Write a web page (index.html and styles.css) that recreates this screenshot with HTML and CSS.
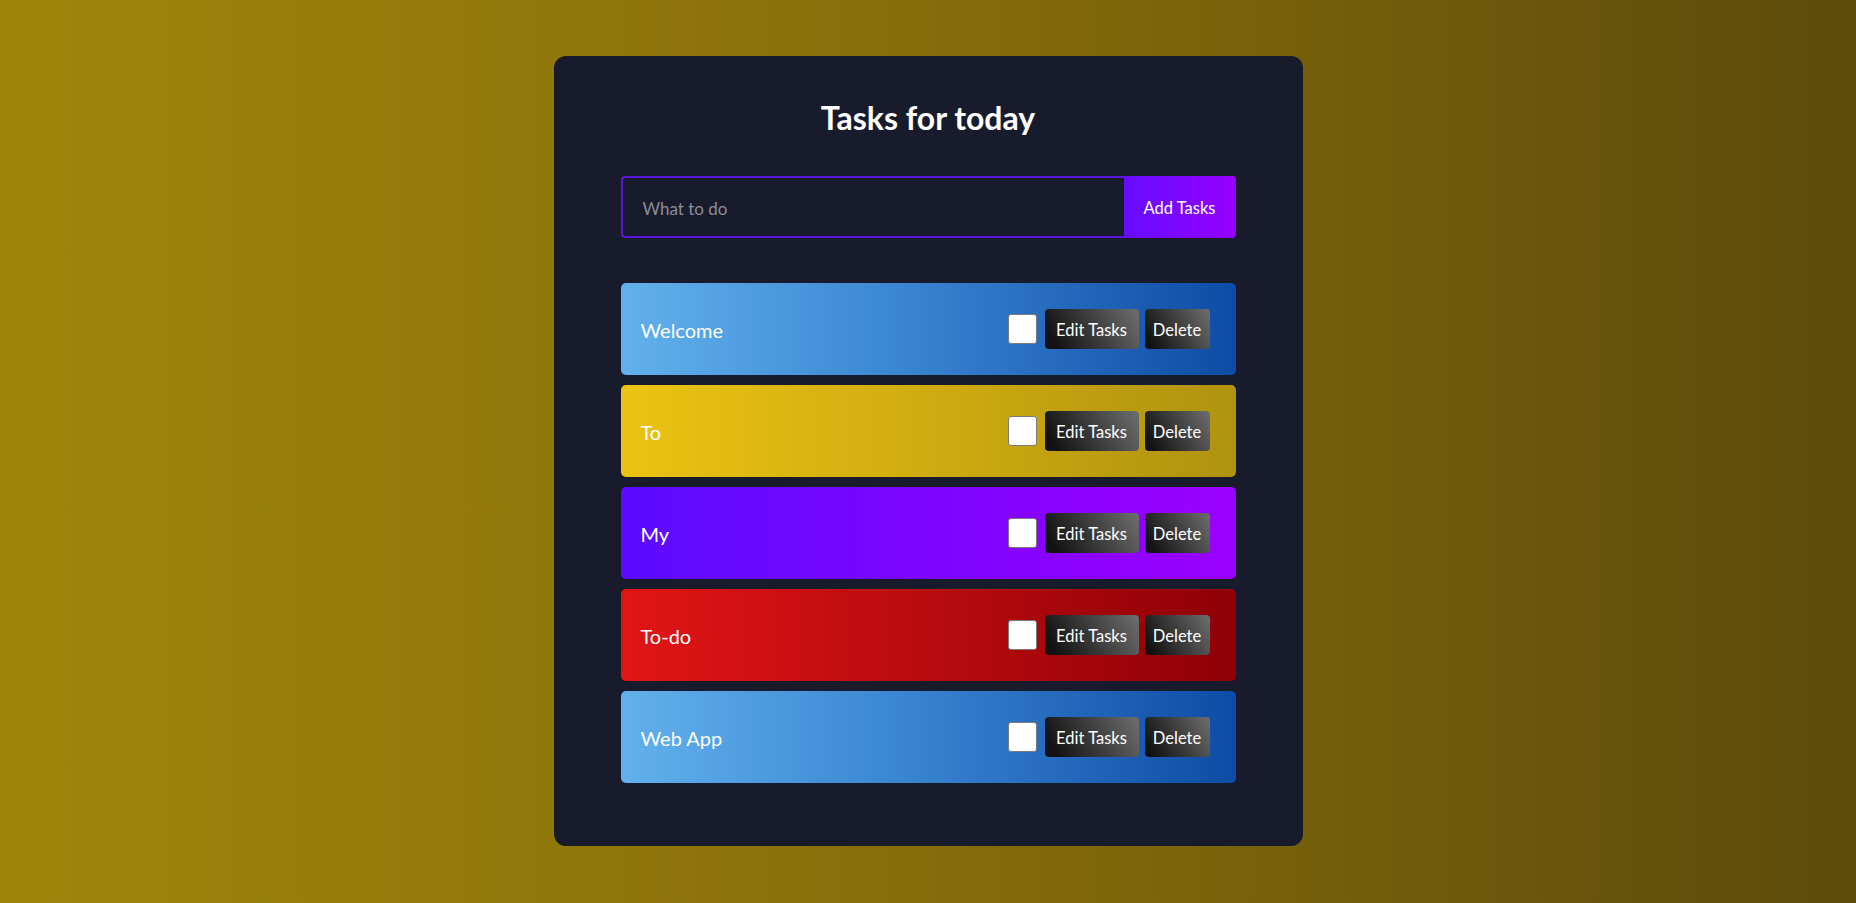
FILE: index.html
```html
<!DOCTYPE html>
<html lang="en">
<head>
<meta charset="utf-8">
<title>Tasks for today</title>
<link rel="stylesheet" href="styles.css">
</head>
<body>
<main class="card">
  <h1 class="title">Tasks for today</h1>
  <form class="add-form">
    <input class="add-input" type="text" placeholder="What to do">
    <button class="add-btn" type="button">Add Tasks</button>
  </form>
  <ul class="task-list">
    <li class="task task-blue">
      <span class="task-text">Welcome</span>
      <div class="task-actions">
        <input class="task-check" type="checkbox">
        <button class="task-btn edit-btn" type="button">Edit Tasks</button>
        <button class="task-btn delete-btn" type="button">Delete</button>
      </div>
    </li>
    <li class="task task-yellow">
      <span class="task-text">To</span>
      <div class="task-actions">
        <input class="task-check" type="checkbox">
        <button class="task-btn edit-btn" type="button">Edit Tasks</button>
        <button class="task-btn delete-btn" type="button">Delete</button>
      </div>
    </li>
    <li class="task task-purple">
      <span class="task-text">My</span>
      <div class="task-actions">
        <input class="task-check" type="checkbox">
        <button class="task-btn edit-btn" type="button">Edit Tasks</button>
        <button class="task-btn delete-btn" type="button">Delete</button>
      </div>
    </li>
    <li class="task task-red">
      <span class="task-text">To-do</span>
      <div class="task-actions">
        <input class="task-check" type="checkbox">
        <button class="task-btn edit-btn" type="button">Edit Tasks</button>
        <button class="task-btn delete-btn" type="button">Delete</button>
      </div>
    </li>
    <li class="task task-blue">
      <span class="task-text">Web App</span>
      <div class="task-actions">
        <input class="task-check" type="checkbox">
        <button class="task-btn edit-btn" type="button">Edit Tasks</button>
        <button class="task-btn delete-btn" type="button">Delete</button>
      </div>
    </li>
  </ul>
</main>
</body>
</html>
```

FILE: styles.css
```css
* {
  box-sizing: border-box;
}

html, body {
  margin: 0;
  height: 100%;
}

body {
  font-family: Lato, "Open Sans", sans-serif;
  background: linear-gradient(to right, #9e860c 0%, #8a700a 45%, #5c4b0b 100%);
  color: #fff;
  padding-top: 56px;
}

.card {
  width: 749px;
  margin: 0 auto;
  background: #181b2b;
  border-radius: 12px;
  padding: 41px 67px 63px;
}

.title {
  margin: 0;
  text-align: center;
  font-size: 32px;
  font-weight: 700;
  line-height: 42px;
  color: #fff;
}

.add-form {
  display: flex;
  height: 62px;
  margin-top: 37px;
}

.add-input {
  flex: 1;
  min-width: 0;
  height: 100%;
  background: #181b2b;
  border: 2px solid #5b18dc;
  border-right: none;
  border-radius: 4px 0 0 4px;
  padding: 2px 20px 0;
  font-family: Lato, sans-serif;
  font-size: 17px;
  color: #fff;
  outline: none;
}

.add-input::placeholder {
  color: #8b8d96;
}

.add-btn {
  width: 112px;
  height: 100%;
  border: none;
  border-radius: 0 4px 4px 0;
  background: linear-gradient(to right, #650dff, #9600ff);
  color: #fff;
  font-family: Lato, sans-serif;
  font-size: 16.5px;
  padding: 2px 0 0;
}

.task-list {
  list-style: none;
  margin: 45px 0 0;
  padding: 0;
  display: flex;
  flex-direction: column;
  gap: 10px;
}

.task {
  height: 92px;
  border-radius: 5px;
  display: flex;
  align-items: center;
  justify-content: space-between;
  padding: 0 26px 0 20px;
}

.task-blue {
  background: linear-gradient(to right, #62b1ec, #3a86d2 45%, #0d4ca6);
}

.task-yellow {
  background: linear-gradient(to right, #ebc313, #d2ae10 45%, #b0930f);
}

.task-purple {
  background: linear-gradient(to right, #5a0cff, #7a05ff 45%, #9b00ff);
}

.task-red {
  background: linear-gradient(to right, #e21515, #b80b0f 50%, #8f0006);
}

.task-text {
  font-size: 20px;
  color: #fff;
  padding-top: 2px;
}

.task-actions {
  display: flex;
  align-items: center;
}

.task-check {
  appearance: none;
  -webkit-appearance: none;
  width: 29px;
  height: 30px;
  margin: 0 8px 0 0;
  background: #fff;
  border: 1px solid #7a7a7a;
  border-radius: 3px;
}

.task-btn {
  height: 40px;
  border: none;
  border-radius: 4px;
  background: linear-gradient(60deg, #121212 10%, #6e6e6e 100%);
  color: #fff;
  font-family: Lato, sans-serif;
  font-size: 16.5px;
  padding: 2px 0 0;
}

.edit-btn {
  width: 94px;
  margin-right: 6px;
}

.delete-btn {
  width: 65px;
}
```
